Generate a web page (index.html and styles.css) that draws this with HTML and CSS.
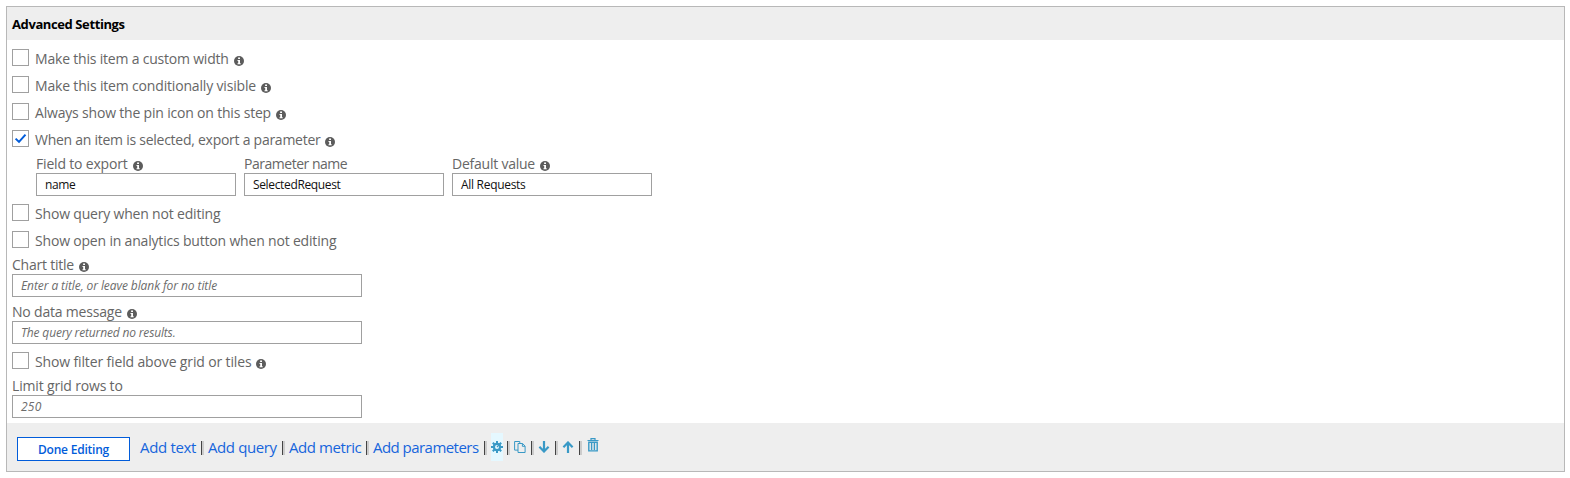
FILE: index.html
```html
<!DOCTYPE html>
<html lang="en">
<head>
<meta charset="utf-8">
<title>Advanced Settings</title>
<link rel="stylesheet" href="styles.css">
</head>
<body>
<svg class="defs" width="0" height="0" aria-hidden="true">
  <symbol id="info" viewBox="0 0 10 10">
    <circle cx="5" cy="5" r="5" fill="#5c5c5c"/>
    <path d="M4.1 1.5h1.9v1.5H4.1zM3.5 4h2.5v3.2h.7v1H3.5v-1h.7V5h-.7z" fill="#fff"/>
  </symbol>
</svg>
<main class="panel">
  <header class="head"><span class="t-head">Advanced Settings</span></header>
  <section class="settings">
    <div class="option"><span class="check"></span><span class="t-width">Make this item a custom width</span><svg class="info"><use href="#info"/></svg></div>
    <div class="option"><span class="check"></span><span class="t-visible">Make this item conditionally visible</span><svg class="info"><use href="#info"/></svg></div>
    <div class="option"><span class="check"></span><span class="t-pin">Always show the pin icon on this step</span><svg class="info"><use href="#info"/></svg></div>
    <div class="option"><span class="check"><svg width="15" height="15" viewBox="0 0 15 15"><path d="M2.6 7.6 6 10.9 12.5 3.6" fill="none" stroke="#015cda" stroke-width="2"/></svg></span><span class="t-export">When an item is selected, export a parameter</span><svg class="info"><use href="#info"/></svg></div>
    <div class="params">
      <div class="field"><div class="label"><span class="t-field">Field to export</span><svg class="info"><use href="#info"/></svg></div><div class="input"><span class="t-value">name</span></div></div>
      <div class="field"><div class="label"><span class="t-param">Parameter name</span></div><div class="input"><span class="t-value">SelectedRequest</span></div></div>
      <div class="field"><div class="label"><span class="t-default">Default value</span><svg class="info"><use href="#info"/></svg></div><div class="input"><span class="t-value-all">All Requests</span></div></div>
    </div>
    <div class="option"><span class="check"></span><span class="t-show">Show query when not editing</span></div>
    <div class="option"><span class="check"></span><span class="t-show">Show open in analytics button when not editing</span></div>
    <div class="field wide"><div class="label"><span class="t-chart">Chart title</span><svg class="info"><use href="#info"/></svg></div><div class="input hint"><span class="t-hint">Enter a title, or leave blank for no title</span></div></div>
    <div class="field wide"><div class="label"><span class="t-nodata">No data message</span><svg class="info"><use href="#info"/></svg></div><div class="input hint"><span class="t-results">The query returned no results.</span></div></div>
    <div class="option"><span class="check"></span><span class="t-filter">Show filter field above grid or tiles</span><svg class="info"><use href="#info"/></svg></div>
    <div class="field wide"><div class="label"><span class="t-limit">Limit grid rows to</span></div><div class="input hint"><span class="t-rows">250</span></div></div>
  </section>
  <footer class="foot">
    <div class="done"><span class="t-done">Done Editing</span></div>
    <nav class="links">
      <a class="l-text">Add text</a><i class="sep"></i>
      <a class="l-query">Add query</a><i class="sep"></i>
      <a class="l-metric">Add metric</a><i class="sep"></i>
      <a class="l-params">Add parameters</a><i class="sep"></i>
      <span class="tool active"><svg width="12" height="12" viewBox="0 0 12 12"><g stroke="#3999c6" fill="none"><path d="M6 0v12M0 6h12M1.8 1.8l8.4 8.4M10.2 1.8l-8.4 8.4" stroke-width="2"/><circle cx="6" cy="6" r="3.1" fill="#e5f8ff" stroke-width="2.2"/><path d="M6 6 7.8 4.2" stroke-width="1.2"/></g></svg></span><i class="sep narrow"></i>
      <span class="tool"><svg width="12" height="12" viewBox="0 0 12 12"><g fill="#eee" stroke="#3999c6" stroke-width="1"><path d="M.6.5h5.2v8.6H.6z"/><path d="M4 2.5h4.6l2.5 2.6v6.4H4z"/><path d="M8.4 2.6v2.7h2.6" fill="none"/></g></svg></span><i class="sep"></i>
      <span class="tool"><svg width="12" height="12" viewBox="0 0 12 12"><path d="M6 0v10M1.4 5.8 6 10.5l4.6-4.7" fill="none" stroke="#3999c6" stroke-width="2.2"/></svg></span><i class="sep"></i>
      <span class="tool"><svg width="12" height="12" viewBox="0 0 12 12"><path d="M6 12V2M1.4 6.2 6 1.5l4.6 4.7" fill="none" stroke="#3999c6" stroke-width="2.2"/></svg></span><i class="sep"></i>
      <span class="tool trash"><svg width="12" height="14" viewBox="0 0 12 14"><g fill="none" stroke="#3999c6"><path d="M.5 2.5h11M4 2V.6h4V2" stroke-width="1.2"/><path d="M1.8 4.3h8.4v8.6H1.8zM4.6 5v7M7.4 5v7" stroke-width="1.4"/></g></svg></span>
    </nav>
  </footer>
</main>
</body>
</html>
```
FILE: styles.css
```css
* { box-sizing: border-box; }
body { margin: 6px 5px 0 6px; background: #fff; font: 14px/19px "Open Sans", "Noto Sans", sans-serif; color: #666; white-space: nowrap; }
.defs { position: absolute; }
.panel { width: 1559px; height: 466px; border: 1px solid #b8b8b8; }
.head { height: 33px; padding: 8px 0 0 5px; background: #eee; color: #000; font-size: 13px; font-weight: 700; line-height: 18px; }
.settings { height: 383px; padding: 9px 5px 0; }
.option { display: flex; align-items: flex-start; height: 27px; }
.check { width: 17px; height: 17px; margin-right: 6px; border: 1px solid #a0a0a0; background: #fff; }
.check svg { display: block; }
.info { flex: none; width: 10px; height: 10px; margin: 7px 0 0 5px; }
.params { display: flex; gap: 8px; margin: 0 0 8px 24px; }
.field { width: 200px; }
.wide { width: 350px; margin-bottom: 8px; }
.label { display: flex; align-items: flex-start; height: 16px; line-height: 13px; }
.label .info { margin-top: 4px; }
.input { height: 23px; padding-left: 8px; border: 1px solid #a0a0a0; color: #111; font-size: 12px; line-height: 21px; }
.hint { color: #6c6c6c; font-style: italic; }

.foot { display: flex; align-items: flex-start; height: 48px; padding: 10px 0 0 10px; background: #eee; }
.done { width: 113px; height: 24px; margin: 4px 10px 0 0; border: 1px solid #015cda; background: #fff; color: #015cda; font-size: 12px; font-weight: 600; line-height: 24px; text-align: center; }
.links { display: flex; align-items: flex-start; color: #1665dc; font-size: 15px; line-height: 28px; }
.sep { display: flex; justify-content: center; width: 12px; height: 14px; margin-top: 8px; }
.narrow { width: 11px; }
.sep::before { content: ""; width: 2px; height: 14px; border-left: 1px solid #444; background: #ccc; }
.tool { display: flex; justify-content: center; align-items: center; width: 12px; height: 28px; }
.active { background: #e5f8ff; }
.trash { height: 24px; margin-left: 1px; }

.t-head { letter-spacing: -.4px; }
.t-width { letter-spacing: -.2px; }
.t-visible { letter-spacing: -.171px; }
.t-pin { letter-spacing: -.188px; }
.t-export { letter-spacing: -.26px; }
.t-field { letter-spacing: -.18px; }
.t-param { letter-spacing: -.48px; }
.t-default { letter-spacing: -.232px; }
.t-value { letter-spacing: -.35px; }
.t-value-all { letter-spacing: -.297px; }
.t-show { letter-spacing: -.185px; }
.t-chart { letter-spacing: -.223px; }
.t-hint { letter-spacing: -.085px; }
.t-nodata { letter-spacing: -.19px; }
.t-results { letter-spacing: -.158px; }
.t-filter { letter-spacing: -.141px; }
.t-limit { letter-spacing: -.17px; }
.t-rows { letter-spacing: .22px; }
.t-done { letter-spacing: -.23px; }
.l-text { width: 56px; letter-spacing: -.33px; }
.l-query { width: 69px; letter-spacing: -.4px; }
.l-metric { width: 72px; letter-spacing: -.42px; }
.l-params { width: 106px; letter-spacing: -.54px; }
```
